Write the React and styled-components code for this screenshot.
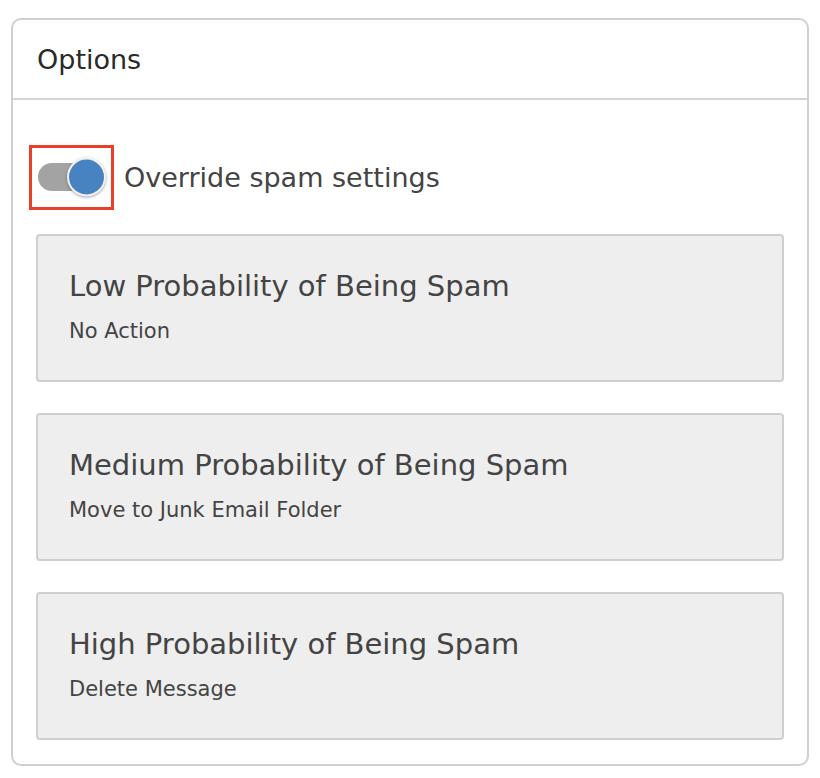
import React, { useState } from 'react';
import styled, { createGlobalStyle } from 'styled-components';

const GlobalStyle = createGlobalStyle`
  html, body {
    margin: 0;
    padding: 0;
    background: #ffffff;
  }
  body {
    font-family: "DejaVu Sans", "Noto Sans", sans-serif;
    color: #444444;
  }
`;

const Panel = styled.div`
  box-sizing: border-box;
  width: 798px;
  height: 748px;
  margin: 18px 0 0 11px;
  border: 2px solid #d0d0d0;
  border-radius: 10px;
  display: flex;
  flex-direction: column;
`;

const Header = styled.div`
  height: 78px;
  display: flex;
  align-items: center;
  padding-left: 24px;
  border-bottom: 2px solid #d4d4d4;
  font-size: 27px;
  color: #2a2a2a;
`;

const Body = styled.div`
  display: flex;
  flex-direction: column;
  padding: 45px 23px 24px 16px;
`;

const ToggleRow = styled.label`
  display: flex;
  align-items: center;
  gap: 10px;
  font-size: 27px;
  color: #444;
  cursor: pointer;
  margin-bottom: 24px;
`;

const ToggleFrame = styled.span`
  box-sizing: border-box;
  width: 85px;
  height: 65px;
  border: 3px solid #ea3f28;
  display: flex;
  align-items: center;
  padding-left: 6px;
`;

const Track = styled.span`
  position: relative;
  display: block;
  width: 66px;
  height: 28px;
  margin-top: -2px;
  border-radius: 14px;
  background: #a3a3a3;
`;

const Knob = styled.span`
  position: absolute;
  top: 50%;
  left: ${(p) => (p.on ? '29px' : '-2px')};
  width: 35px;
  height: 35px;
  transform: translateY(-50%);
  border-radius: 50%;
  background: #4683c0;
  border: 2px solid #f2f2f2;
  box-shadow: 0 1px 3px rgba(0, 0, 0, 0.35);
`;

const Cards = styled.div`
  display: flex;
  flex-direction: column;
  gap: 31px;
  padding-left: 7px;
`;

const Card = styled.div`
  box-sizing: border-box;
  height: 148px;
  background: #eeeeee;
  border: 2px solid #cfcfcf;
  border-radius: 4px;
  padding: 32px 0 0 31px;
`;

const CardTitle = styled.div`
  font-size: 29px;
  line-height: 36px;
  color: #444;
`;

const CardSub = styled.div`
  margin-top: 15px;
  font-size: 21px;
  line-height: 24px;
  color: #444;
`;

const levels = [
  { title: 'Low Probability of Being Spam', action: 'No Action' },
  { title: 'Medium Probability of Being Spam', action: 'Move to Junk Email Folder' },
  { title: 'High Probability of Being Spam', action: 'Delete Message' },
];

export default function App() {
  const [on, setOn] = useState(true);

  return (
    <>
      <GlobalStyle />
      <Panel>
        <Header>Options</Header>
        <Body>
          <ToggleRow onClick={() => setOn(!on)}>
            <ToggleFrame>
              <Track>
                <Knob on={on ? 1 : 0} />
              </Track>
            </ToggleFrame>
            Override spam settings
          </ToggleRow>
          <Cards>
            {levels.map((l) => (
              <Card key={l.title}>
                <CardTitle>{l.title}</CardTitle>
                <CardSub>{l.action}</CardSub>
              </Card>
            ))}
          </Cards>
        </Body>
      </Panel>
    </>
  );
}
